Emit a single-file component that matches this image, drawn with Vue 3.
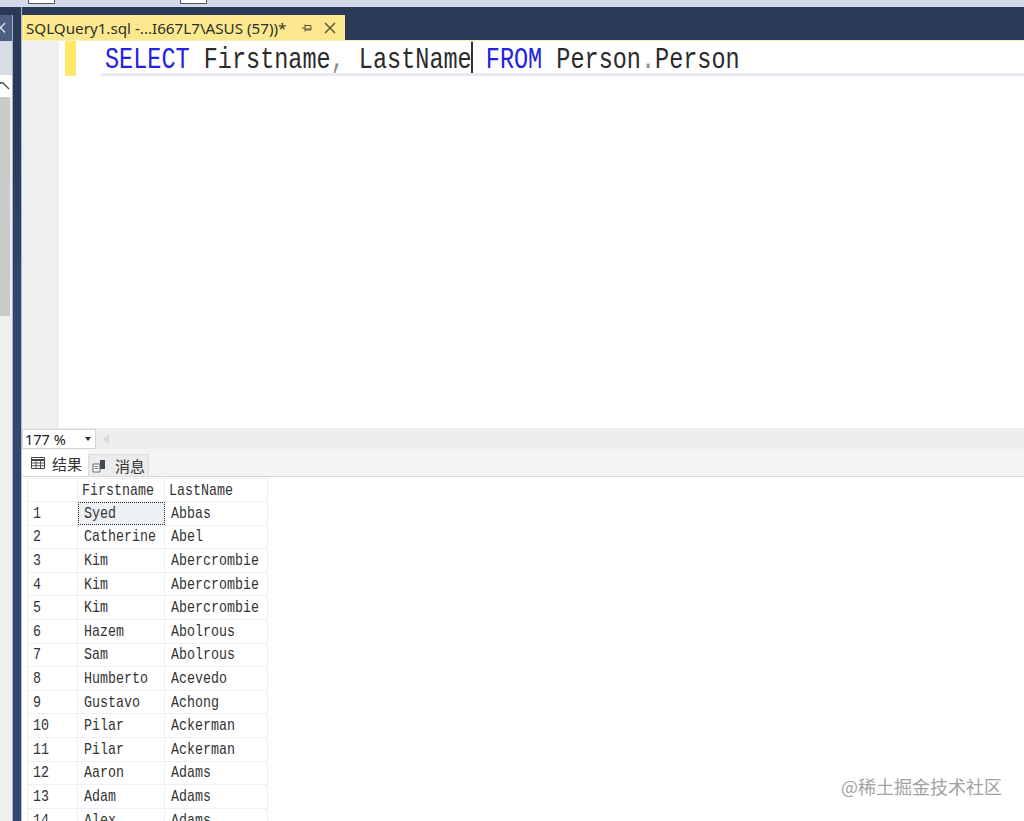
<script setup>
const rows = [
  ['1', 'Syed', 'Abbas'],
  ['2', 'Catherine', 'Abel'],
  ['3', 'Kim', 'Abercrombie'],
  ['4', 'Kim', 'Abercrombie'],
  ['5', 'Kim', 'Abercrombie'],
  ['6', 'Hazem', 'Abolrous'],
  ['7', 'Sam', 'Abolrous'],
  ['8', 'Humberto', 'Acevedo'],
  ['9', 'Gustavo', 'Achong'],
  ['10', 'Pilar', 'Ackerman'],
  ['11', 'Pilar', 'Ackerman'],
  ['12', 'Aaron', 'Adams'],
  ['13', 'Adam', 'Adams'],
  ['14', 'Alex', 'Adams']
]
</script>

<template>
  <div class="page">
    <div class="toolbar">
      <span class="tool-box first"></span>
      <span class="tool-box second"></span>
    </div>
    <div class="body">
      <aside class="side">
        <div class="side-head">
          <svg class="side-x" width="7" height="12" viewBox="0 0 7 12"><path d="M-4 1L5 10.500M5 1L-4 10.500" stroke="#dfe4ec" stroke-width="1.400" fill="none"/></svg>
        </div>
        <div class="side-gap"></div>
        <div class="side-up">
          <svg width="10" height="8" viewBox="0 0 10 8"><path d="M0 1 L3 1 L9 7" fill="none" stroke="#444" stroke-width="1.300"/></svg>
        </div>
        <div class="side-thumb"></div>
        <div class="side-track"></div>
      </aside>
      <div class="strip"></div>
      <main class="main">
        <div class="tabstrip">
          <div class="tab">
            <span class="tab-title">SQLQuery1.sql -...I667L7\ASUS (57))*</span>
            <svg class="pin" width="12" height="12" viewBox="0 0 12 12"><path d="M1 6H4M4 2.500V9.500M4 3.500H10V8H4M4 7H10" fill="none" stroke="#5a573c" stroke-width="1"/></svg>
            <svg class="close" width="12" height="12" viewBox="0 0 12 12"><path d="M1 1L11 11M11 1L1 11" stroke="#5a573c" stroke-width="1.500"/></svg>
          </div>
        </div>
        <div class="editor">
          <div class="gutter"></div>
          <div class="margin"><div class="change"></div></div>
          <div class="code-area">
            <div class="code-line"><div class="code-text"><span class="kw">SELECT</span> Firstname<span class="comma">,</span> LastName<span class="caret"></span> <span class="kw">FROM</span> Person<span class="comma">.</span>Person</div></div>
          </div>
        </div>
        <div class="zoom-row">
          <div class="zoom-box"><span>177 %</span><i class="arrow"></i></div>
          <i class="scroll-left"></i>
        </div>
        <div class="tabs2">
          <div class="rtab active">
            <svg width="14" height="12" viewBox="0 0 14 12"><path d="M0.500 0.500H13.500V11.500H0.500Z" fill="#fff" stroke="#444"/><path d="M0.500 3H13.500" stroke="#444" stroke-width="2"/><path d="M0.500 6H13.500M0.500 8.700H13.500M5 3V11.500M9.500 3V11.500" stroke="#555"/></svg>
            <span>结果</span>
          </div>
          <div class="rtab">
            <svg width="15" height="14" viewBox="0 0 15 14"><path d="M1 5H8V13H1Z" fill="#fff" stroke="#666"/><path d="M2.500 7.500H6.500M2.500 9.500H6.500" stroke="#888"/><path d="M8 1H13V10H8Z" fill="#3f4a58"/></svg>
            <span>消息</span>
          </div>
        </div>
        <div class="grid-wrap">
          <table class="grid">
            <thead>
              <tr>
                <th class="c0"></th>
                <th class="c1"><span class="txt">Firstname</span></th>
                <th class="c2"><span class="txt">LastName</span></th>
              </tr>
            </thead>
            <tbody>
              <tr v-for="(r, i) in rows" :key="r[0]">
                <td class="c0 num"><span class="txt">{{ r[0] }}</span></td>
                <td class="c1" :class="{ sel: i === 0 }"><span class="txt">{{ r[1] }}</span></td>
                <td class="c2"><span class="txt">{{ r[2] }}</span></td>
              </tr>
            </tbody>
          </table>
          <div class="mark">@稀土掘金技术社区</div>
        </div>
      </main>
    </div>
  </div>
</template>

<style>
html, body { margin: 0; background: #fff; overflow: hidden; }
</style>

<style scoped>
.page {
  width: 1024px;
  height: 821px;
  overflow: hidden;
  display: flex;
  flex-direction: column;
  background: #2a3a56;
  font-family: "Noto Sans", sans-serif;
}
.toolbar {
  height: 7px;
  flex: none;
  background: #d3daea;
  position: relative;
  overflow: hidden;
}
.tool-box {
  position: absolute;
  top: -8px;
  width: 25px;
  height: 10px;
  background: #fff;
  border: 1px solid #555;
}
.tool-box.first { left: 28px; }
.tool-box.second { left: 180px; }
.body { flex: 1; display: flex; min-height: 0; }
.side {
  width: 13px;
  flex: none;
  margin-top: 8px;
  background: #eef0ef;
  display: flex;
  flex-direction: column;
  border-right: 1px solid #a8b2ca;
  box-sizing: border-box;
}
.side-head {
  height: 26px;
  flex: none;
  background: #4d5f80;
  overflow: hidden;
}
.side-x { display: block; margin-top: 7px; }
.side-gap { height: 34px; flex: none; background: #d9dce4; }
.side-up { height: 22px; flex: none; background: #fff; display: flex; align-items: center; }
.side-thumb { height: 219px; flex: none; width: 10px; background: #c9cbc9; }
.side-track { flex: 1; }
.strip {
  width: 8px;
  flex: none;
  background: linear-gradient(#2a3a56 0, #2a3a56 120px, #33466f 300px);
}
.main {
  flex: 1;
  min-width: 0;
  border-left: 1px solid #a9bad6;
  display: flex;
  flex-direction: column;
}
.tabstrip { height: 33px; flex: none; padding-top: 8px; box-sizing: border-box; background: #2a3a56; }
.tab {
  width: 323px;
  height: 25px;
  background: #fce98f;
  display: flex;
  align-items: center;
  padding-left: 4px;
  box-sizing: border-box;
  color: #2f2f28;
}
.tab-title { font-size: 15.2px; white-space: nowrap; width: 275px; flex: none; }
.pin { flex: none; }
.close { flex: none; margin-left: 11px; }
.editor {
  height: 388px;
  flex: none;
  display: flex;
  background: #fff;
  border-top: 1px solid #f2efc0;
  box-sizing: border-box;
}
.gutter { width: 37px; background: #f0f0f0; flex: none; }
.margin { margin-left: 6px; width: 36px; flex: none; }
.change { width: 11px; height: 35px; background: #ffe768; }
.code-area { flex: 1; min-width: 0; }
.code-line {
  height: 35px;
  box-sizing: border-box;
  border-bottom: 3px solid #e9ebf2;
  padding: 3px 0 0 4px;
  overflow: hidden;
}
.code-text {
  font-family: "Liberation Mono", monospace;
  font-size: 23.5px;
  line-height: 28px;
  color: #2b2b2b;
  white-space: pre;
  transform: scaleY(1.22);
  transform-origin: 0 0;
}
.kw { color: #2222e0; }
.comma { color: #8d8d8d; }
.caret {
  display: inline-block;
  width: 2px;
  height: 27px;
  margin-top: -2px;
  background: #333;
  vertical-align: top;
  margin-left: -1px;
  margin-right: -1px;
}
.zoom-row {
  height: 21px;
  flex: none;
  background: #eeeeef;
  display: flex;
  align-items: center;
}
.zoom-box {
  width: 74px;
  height: 20px;
  background: #fff;
  border: 1px solid #d5d5d5;
  box-sizing: border-box;
  display: flex;
  align-items: center;
  justify-content: space-between;
  padding: 0 4px 0 2px;
  font-size: 14.500px;
  color: #222;
}
.arrow {
  width: 0;
  height: 0;
  border-left: 3.500px solid transparent;
  border-right: 3.500px solid transparent;
  border-top: 4px solid #333;
}
.scroll-left {
  width: 0;
  height: 0;
  margin-left: 7px;
  border-top: 5px solid transparent;
  border-bottom: 5px solid transparent;
  border-right: 6px solid #d9d9d9;
}
.tabs2 {
  height: 28px;
  flex: none;
  background: #f4f4f4;
  display: flex;
  align-items: flex-end;
  border-bottom: 1px solid #d8d8d8;
  box-sizing: border-box;
  font-family: "Noto Sans CJK SC", sans-serif;
  font-size: 15px;
  color: #333;
}
.rtab {
  height: 22px;
  display: flex;
  align-items: center;
  gap: 8px;
  padding: 0 3px 0 3px;
  background: #ececec;
  border: 1px solid #dcdcdc;
  border-bottom: none;
  box-sizing: border-box;
}
.rtab.active {
  height: 26px;
  width: 66px;
  gap: 7px;
  padding-left: 9px;
  background: #fff;
  border: none;
}
.grid-wrap {
  flex: 1;
  min-height: 0;
  background: #fff;
  padding: 1px 0 0 5px;
  position: relative;
  overflow: hidden;
}
.grid {
  border-collapse: collapse;
  table-layout: fixed;
  width: 241px;
  font-family: "Liberation Mono", monospace;
  font-size: 13.33px;
  color: #333;
}
.grid th, .grid td {
  border: 1px solid #eef0f3;
  padding: 0 0 0 6px;
  height: 23.6px;
  box-sizing: border-box;
  font-weight: 400;
  text-align: left;
  white-space: nowrap;
  overflow: hidden;
}
.grid th { padding-left: 4px; height: 23px; }
.txt { display: inline-block; transform: scaleY(1.2); }
.c0 { width: 50px; }
.c1 { width: 87px; }
.c2 { width: 103px; }
.grid td.num { padding-left: 5px; }
.grid td.sel {
  background: #edf0f3;
  outline: 1px dotted #333;
  outline-offset: -1px;
}
.mark {
  position: absolute;
  right: 22px;
  bottom: 22px;
  font-family: "Noto Sans CJK SC", sans-serif;
  font-size: 18px;
  color: #a2a2a2;
}
</style>
